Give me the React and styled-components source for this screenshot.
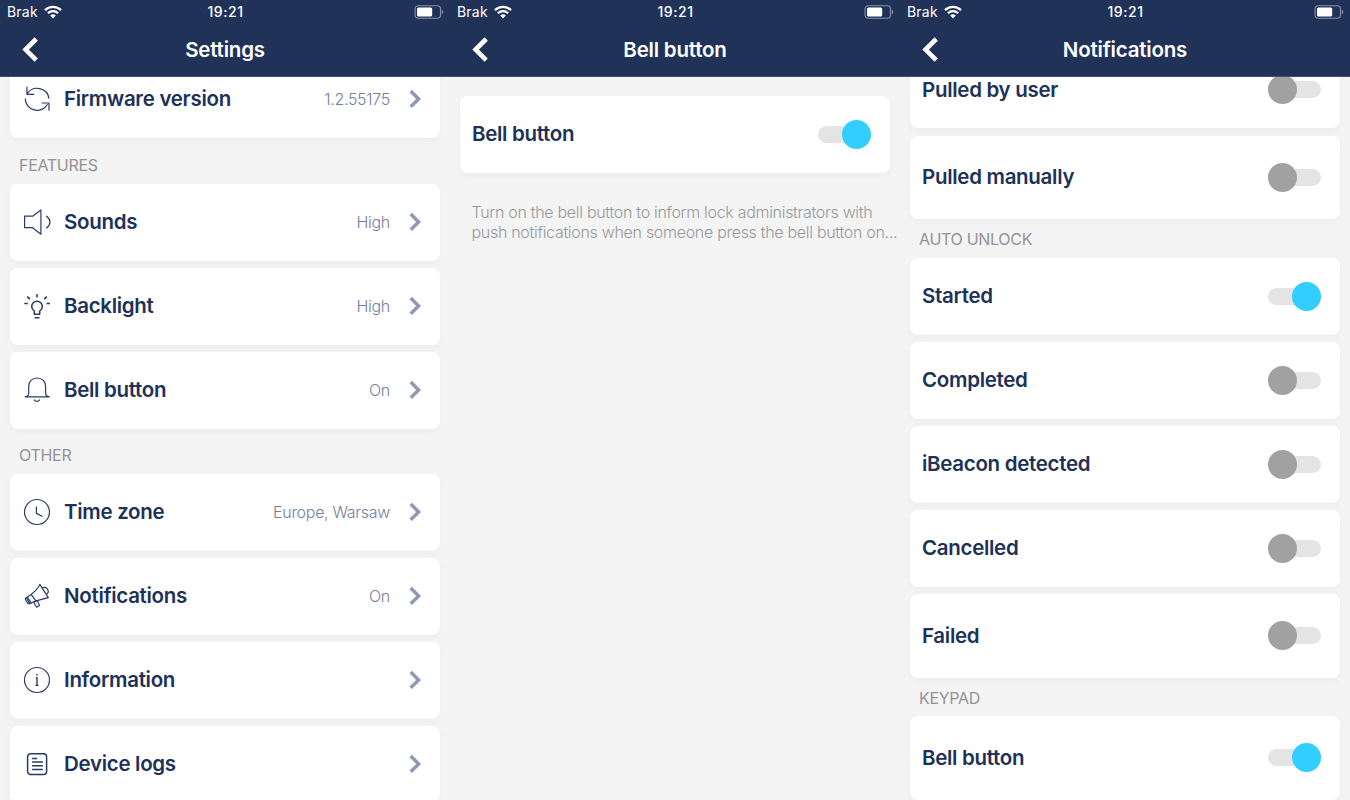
import React from "react";
import styled, { createGlobalStyle } from "styled-components";

const GlobalStyle = createGlobalStyle`
  * { box-sizing: border-box; }
  body {
    margin: 0;
    background: #f4f4f4;
    font-family: Inter, "Liberation Sans", sans-serif;
    overflow: hidden;
  }
  svg { display: block; flex: none; }
`;

const Screens = styled.main`
  display: grid;
  grid-template-columns: repeat(3, 450px);
  width: 1350px;
  height: 800px;
  overflow: hidden;
`;

const Screen = styled.section`
  display: flex;
  flex-direction: column;
  height: 800px;
  overflow: hidden;
  background: #f4f4f4;
`;

const Header = styled.header`
  flex: none;
  height: 77px;
  background: #213259;
  border-bottom: 1px solid #3f4e78;
  color: #fff;
`;

const StatusBar = styled.div`
  display: grid;
  grid-template-columns: 1fr auto 1fr;
  align-items: center;
  height: 24px;
  padding: 0 6px 0 7px;
  font-size: 14px;
  line-height: 24px;
`;

const Carrier = styled.div`
  display: flex;
  align-items: center;
  gap: 6px;
  letter-spacing: 0.2px;
`;

const Clock = styled.div`
  font-weight: 500;
  letter-spacing: 0.55px;
`;

const BatterySlot = styled.div`
  display: flex;
  justify-content: flex-end;
`;

const NavBar = styled.div`
  display: grid;
  grid-template-columns: 60px 1fr 60px;
  align-items: center;
  height: 52px;
`;

const BackButton = styled.div`
  padding-left: 20px;
`;

const Title = styled.h1`
  margin: 0;
  font-size: 20.5px;
  line-height: 52px;
  font-weight: 600;
  text-align: center;
  letter-spacing: ${(p) => p.$spacing}px;
`;

const Viewport = styled.div`
  flex: 1;
  min-height: 0;
  overflow: hidden;
`;

const Scroll = styled.div`
  display: flex;
  flex-direction: column;
  padding: 0 10px;
  margin-top: ${(p) => p.$offset}px;
`;

const Group = styled.div`
  display: flex;
  flex-direction: column;
  gap: 7.5px;
`;

const SectionTitle = styled.h2`
  margin: 0;
  padding: ${(p) => p.$top}px 0 0 9px;
  height: ${(p) => p.$height}px;
  color: #929296;
  font-size: 16px;
  line-height: 20px;
  font-weight: 400;
  letter-spacing: ${(p) => p.$spacing}px;
`;

const Card = styled.div`
  display: flex;
  align-items: center;
  flex: none;
  height: ${(p) => (p.$tall ? 83.5 : 76.5)}px;
  padding: 0 18px 0 12px;
  border-radius: 8px;
  background: #fff;
  box-shadow: 0 3px 9px rgba(0, 0, 0, 0.035);
`;

const IconSlot = styled.span`
  width: 42px;
  flex: none;
`;

const Label = styled.span`
  flex: 1;
  color: #203157;
  font-size: 20.5px;
  line-height: 26px;
  font-weight: 600;
  white-space: nowrap;
  letter-spacing: ${(p) => p.$spacing}px;
`;

const Value = styled.span`
  margin-right: 18px;
  color: #74809f;
  font-size: 16px;
  line-height: 20px;
  font-weight: 300;
  letter-spacing: ${(p) => p.$spacing}px;
`;

const Track = styled.span`
  display: flex;
  align-items: center;
  justify-content: ${(p) => (p.$on ? "flex-end" : "flex-start")};
  width: 53px;
  height: 17px;
  margin-right: 1px;
  border-radius: 9px;
  background: #e4e4e4;
`;

const Knob = styled.span`
  flex: none;
  width: 29px;
  height: 29px;
  border-radius: 50%;
  background: ${(p) => (p.$on ? "#31ceff" : "#a1a1a1")};
`;

const Description = styled.p`
  margin: 29px 0 0 11.5px;
  color: #98989b;
  font-size: 16px;
  line-height: 20.5px;
  font-weight: 300;
  white-space: nowrap;
  letter-spacing: -0.3px;
`;

const DescriptionLine = styled.span`
  display: block;
  letter-spacing: ${(p) => p.$spacing}px;
`;

const Wifi = () => (
  <svg width="18" height="14" viewBox="0 0 18 14" fill="none" stroke="#fff" strokeWidth="2.2">
    <path d="M1 5.1a11.4 11.4 0 0 1 16 0" />
    <path d="M3.9 8.3a7.2 7.2 0 0 1 10.2 0" />
    <path d="M9 13.5L6.2 10.6a4 4 0 0 1 5.6 0z" fill="#fff" stroke="none" />
  </svg>
);

const Battery = () => (
  <svg width="30" height="14" viewBox="0 0 30 14">
    <rect x="1.1" y="0.7" width="25.4" height="12.6" rx="3.2" fill="none" stroke="#8891a9" strokeWidth="1.1" />
    <rect x="3" y="2.5" width="15.2" height="9" rx="1.5" fill="#fff" />
    <path d="M27.8 4.8q1.5.5 1.5 2.2t-1.5 2.2z" fill="#8891a9" />
  </svg>
);

const Back = () => (
  <svg width="20" height="28" viewBox="0 0 20 28" fill="none" stroke="#fff" strokeWidth="4.6">
    <path d="M16.2 3L5.6 13.6 16.2 24.2" />
  </svg>
);

const Chevron = () => (
  <svg width="14" height="22" viewBox="0 0 14 22" fill="none" stroke="#9099b1" strokeWidth="3.5">
    <path d="M2.7 3l7.9 7.9-7.9 7.9" />
  </svg>
);

const glyphs = {
  refresh: (
    <>
      <path d="M4.9 2.7v7.6h7.3M5.2 9.6A12 12 0 0 1 27 14.6" />
      <path d="M3.2 14.6A12 12 0 0 0 25.6 20.3M19.6 19h7.4v7.8" />
    </>
  ),
  sound: (
    <>
      <path d="M2.6 9.2h8L18.9 3v24.2l-8.3-6.5h-8z" />
      <path d="M24.3 9q3.7 2.7 3.7 6.1t-3.7 6.2" />
    </>
  ),
  bulb: (
    <g strokeWidth="1.55">
      <path d="M12.3 23.2v-3.1c-1.6-1.2-2.6-2.6-2.6-4.6a5.3 5.3 0 0 1 10.6 0c0 2-1 3.4-2.6 4.6v3.1z" />
      <path d="M12.7 26.7h4.8M15 3.1v3.3M5.3 5.6l2.5 2.5M24.8 5.6l-2.5 2.5M2.3 12.4h3.5M24.5 12.4H28" />
    </g>
  ),
  bell: (
    <>
      <path d="M2.7 21.8h25.1M2.7 21.8c2.7-.2 4-1.2 4-3.6v-7C6.7 6.5 10 3 15.1 3s8.5 3.5 8.5 8.2v7c0 2.4 1.4 3.4 4.2 3.6" />
      <path d="M11.8 24.6q3.1 3.6 6.1 0" />
    </>
  ),
  clock: (
    <>
      <circle cx="15" cy="15" r="12.5" />
      <path d="M14.4 9.5v6.9l6.2 3.1" />
    </>
  ),
  megaphone: (
    <>
      <path d="M17.8 3.4l8.5 13.2-12.2 3.2-6.2 2.8-3.6-5.8 4.8-3.4c3.6-2.7 7.2-5.9 8.7-10z" />
      <path d="M9.1 13.4l4.9 6.7M4.3 16.8c-.9.3-1.2 1.1-.7 1.9l2 3.1c.5.8 1.4 1.1 2.2.7M5.3 16.2l3.9 5.7" />
      <path d="M20.2 7.3c1-1.4 3.9-1.3 5.2.7 1.2 1.8.8 4-.5 5M11.7 21.2l2.9 5 2.9-1.7-2.2-5M11.7 21.2l3.7-1.8" />
    </>
  ),
  info: (
    <>
      <circle cx="15" cy="15" r="12.5" />
      <path d="M15 9v1.6M13.8 12.7H15v7.5M13.5 20.4h3" strokeWidth="1.4" />
    </>
  ),
  logs: (
    <g strokeWidth="1.5">
      <rect x="5.6" y="4.7" width="19" height="20.9" rx="3" />
      <path d="M10.1 9.4h5M10.1 13h10.7M10.1 16.8h10.7M10.1 20.5h10.7" />
    </g>
  ),
};

const Icon = ({ name }) => (
  <svg width="30" height="30" viewBox="0 0 30 30" fill="none" stroke="#283b67" strokeWidth="1.2" strokeLinejoin="round">
    {glyphs[name]}
  </svg>
);

const Phone = ({ title, titleSpacing, offset, children }) => (
  <Screen>
    <Header>
      <StatusBar>
        <Carrier>Brak<Wifi /></Carrier>
        <Clock>19:21</Clock>
        <BatterySlot><Battery /></BatterySlot>
      </StatusBar>
      <NavBar>
        <BackButton><Back /></BackButton>
        <Title $spacing={titleSpacing}>{title}</Title>
      </NavBar>
    </Header>
    <Viewport>
      <Scroll $offset={offset}>{children}</Scroll>
    </Viewport>
  </Screen>
);

const LinkRow = ({ icon, label, spacing = -0.3, value, valueSpacing = -0.3 }) => (
  <Card>
    <IconSlot><Icon name={icon} /></IconSlot>
    <Label $spacing={spacing}>{label}</Label>
    {value && <Value $spacing={valueSpacing}>{value}</Value>}
    <Chevron />
  </Card>
);

const ToggleRow = ({ label, spacing = -0.3, on, tall }) => (
  <Card $tall={tall}>
    <Label $spacing={spacing}>{label}</Label>
    <Track $on={on}><Knob $on={on} /></Track>
  </Card>
);

export default function App() {
  return (
    <>
      <GlobalStyle />
      <Screens>
        <Phone title="Settings" titleSpacing={-0.2} offset={-16}>
          <Group>
            <LinkRow icon="refresh" label="Firmware version" value="1.2.55175" />
          </Group>
          <SectionTitle $top={17} $height={46.5} $spacing={-0.3}>FEATURES</SectionTitle>
          <Group>
            <LinkRow icon="sound" label="Sounds" value="High" />
            <LinkRow icon="bulb" label="Backlight" value="High" />
            <LinkRow icon="bell" label="Bell button" value="On" />
          </Group>
          <SectionTitle $top={16.5} $height={45.5} $spacing={-0.3}>OTHER</SectionTitle>
          <Group>
            <LinkRow icon="clock" label="Time zone" value="Europe, Warsaw" />
            <LinkRow icon="megaphone" label="Notifications" value="On" />
            <LinkRow icon="info" label="Information" />
            <LinkRow icon="logs" label="Device logs" />
          </Group>
        </Phone>

        <Phone title="Bell button" titleSpacing={-0.2} offset={19}>
          <ToggleRow label="Bell button" on />
          <Description>
            <DescriptionLine $spacing={-0.3}>Turn on the bell button to inform lock administrators with</DescriptionLine>
            <DescriptionLine $spacing={-0.3}>push notifications when someone press the bell button on...</DescriptionLine>
          </Description>
        </Phone>

        <Phone title="Notifications" titleSpacing={-0.2} offset={-25.5}>
          <Group>
            <ToggleRow label="Pulled by user" />
            <ToggleRow label="Pulled manually" tall />
          </Group>
          <SectionTitle $top={10} $height={39} $spacing={-0.3}>AUTO UNLOCK</SectionTitle>
          <Group>
            <ToggleRow label="Started" on />
            <ToggleRow label="Completed" />
            <ToggleRow label="iBeacon detected" />
            <ToggleRow label="Cancelled" />
            <ToggleRow label="Failed" tall />
          </Group>
          <SectionTitle $top={10} $height={38.5} $spacing={-0.3}>KEYPAD</SectionTitle>
          <Group>
            <ToggleRow label="Bell button" on tall />
          </Group>
        </Phone>
      </Screens>
    </>
  );
}
